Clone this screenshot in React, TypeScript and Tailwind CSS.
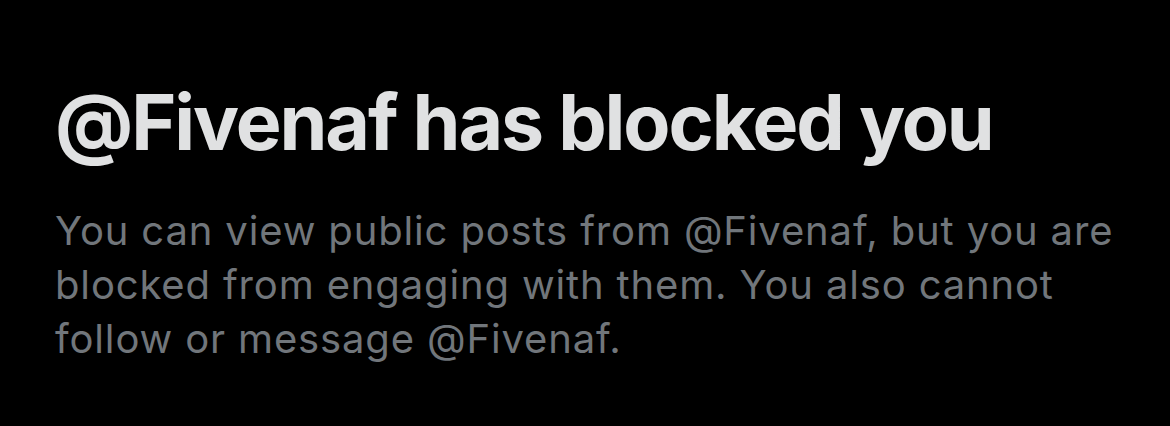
export default function App() {
  return (
    <div className="min-h-screen w-full bg-black pl-[55px] pr-[40px] pt-[78px]" style={{ fontFamily: 'Inter, "Noto Sans", sans-serif' }}>
      <h1 className="text-[77px] leading-[88px] font-bold tracking-[-2.1px] text-[#e0e1e2]">
        @Fivenaf has blocked you
      </h1>
      <p className="mt-[38px] max-w-[1080px] text-[40px] leading-[54px] tracking-[0.85px] text-[#71767b]">
        You can view public posts from @Fivenaf, but you are blocked from engaging with them. You also cannot follow or message @Fivenaf.
      </p>
    </div>
  );
}
